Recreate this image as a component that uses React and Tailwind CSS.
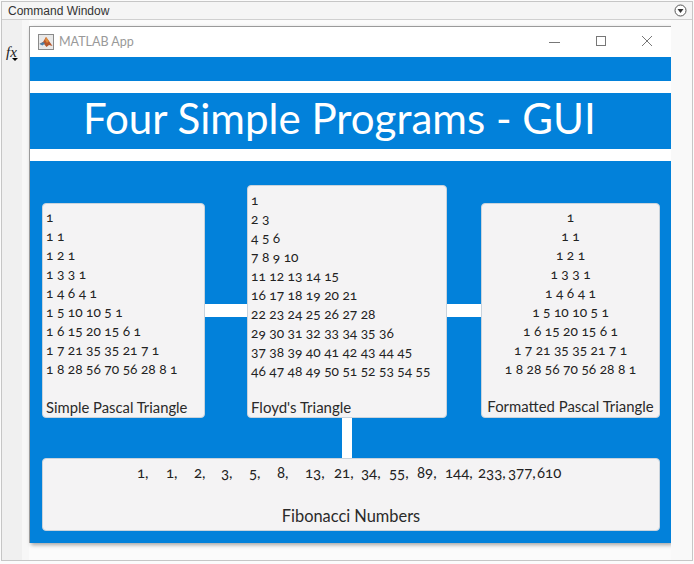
const pascal = ["1","1 1","1 2 1","1 3 3 1","1 4 6 4 1","1 5 10 10 5 1","1 6 15 20 15 6 1","1 7 21 35 35 21 7 1","1 8 28 56 70 56 28 8 1"];
const floyd = ["1","2 3","4 5 6","7 8 9 10","11 12 13 14 15","16 17 18 19 20 21","22 23 24 25 26 27 28","29 30 31 32 33 34 35 36","37 38 39 40 41 42 43 44 45","46 47 48 49 50 51 52 53 54 55"];
const fib = [["1","w-[29px]"],["1","w-[28px]"],["2","w-[27px]"],["3","w-[28px]"],["5","w-[28px]"],["8","w-[28px]"],["13","w-[29px]"],["21","w-[27px]"],["34","w-[28px]"],["55","w-[28px]"],["89","w-[28px]"],["144","w-[33px]"],["233","w-[30px]"],["377","w-[29px]"],["610","w-auto"]];
const font = "font-['Lato','Open_Sans',sans-serif]";

function Lines({ rows, center, pt }) {
  return (
    <div className={`${pt} ${center ? "text-center" : "pl-[3px]"} text-[13.7px] leading-[19px] text-[#222] oldstyle-nums`}>
      {rows.map((r) => <div key={r} className="h-[19.05px] whitespace-nowrap">{r}</div>)}
    </div>
  );
}

function Card({ className, children, label, labelClass }) {
  return (
    <div className={`${className} flex flex-col justify-between rounded-[4px] bg-[#f4f3f4] border border-[#c9d3dc]`}>
      {children}
      <div className={`${labelClass} leading-[18px] text-[#2a2a2a] whitespace-nowrap`}>{label}</div>
    </div>
  );
}

function MatlabIcon() {
  return (
    <svg width="16" height="16" viewBox="0 0 16 16">
      <rect x="0.5" y="0.5" width="15" height="15" fill="#e9e9e9" stroke="#8a8a8a" />
      <path d="M1.5 10 L5 8 L8 3 L11 7 L14.5 12 L11 11 L8.5 13 L6 10 Z" fill="#b5562a" />
      <path d="M1.5 10 L5 8 L7 9.5 L4.5 11.5 Z" fill="#4d7fa8" />
      <path d="M8 3 L11 7 L9 9 L7 6 Z" fill="#e08a3c" />
    </svg>
  );
}

export default function App() {
  return (
    <div className={`${font} w-[694px] h-[564px] bg-[#fbfbfb] overflow-hidden pt-[1px] px-[1px] pb-[3px] flex flex-col`}>
      <div className="flex-1 flex flex-col border border-[#c6c6c6] min-h-0">
        <div className="h-[18px] flex items-center justify-between pl-[6px] pr-[5px] bg-[#f5f5f5] border-b border-[#d0d0d0] font-['Liberation_Sans',sans-serif] text-[12px] text-[#333]">
          <span>Command Window</span>
          <svg width="13" height="13" viewBox="0 0 13 13">
            <circle cx="6.5" cy="6.5" r="5.5" fill="#fff" stroke="#555" />
            <path d="M3.5 5 H9.5 L6.5 9 Z" fill="#333" />
          </svg>
        </div>
        <div className="flex-1 flex min-h-0">
          <div className="w-[20px] bg-[#f0f0f0] pt-[24px] pl-[4px] shrink-0">
            <div className="relative font-['Liberation_Serif',serif] italic text-[15px] leading-[16px] text-[#222]">
              fx
              <span className="absolute left-[6px] top-[14px] w-0 h-0 border-x-[3px] border-x-transparent border-t-[3px] border-t-black"></span>
            </div>
          </div>
          <div className="w-[7px] bg-[#f7f7f7] shrink-0"></div>
          <div className="w-[642px] h-[517px] mt-[6px] shrink-0 flex flex-col border-t border-l border-[#9a9a9a] shadow-[2px_2px_4px_rgba(0,0,0,0.35)]">
            <div className="h-[30px] bg-white flex items-center pl-[8px] pr-[12px]">
              <MatlabIcon />
              <span className="ml-[5px] text-[12.5px] text-[#999] flex-1">MATLAB App</span>
              <svg width="110" height="14" viewBox="0 0 110 14" stroke="#777" fill="none" strokeWidth="1">
                <path d="M0 7.5 H11" />
                <rect x="47.5" y="1.5" width="9" height="9" />
                <path d="M93 1 L103 11 M103 1 L93 11" />
              </svg>
            </div>
            <div className="flex-1 bg-[#0281da] flex flex-col">
              <div className="h-[24px]"></div>
              <div className="h-[12px] bg-white"></div>
              <div className="h-[56px] flex items-center pl-[53px] pb-[6px] text-white text-[42.1px] leading-[50px] whitespace-nowrap">
                Four Simple Programs - GUI
              </div>
              <div className="h-[12px] bg-white"></div>
              <div className="flex items-end pl-[12px] pt-[24px]">
                <Card className="w-[163px] h-[215px] text-[14.8px]" label="Simple Pascal Triangle" labelClass="pl-[3px] pb-[1px]">
                  <Lines rows={pascal} pt="pt-[3px]" />
                </Card>
                <div className="w-[42px] h-[13px] bg-white mb-[101px]"></div>
                <Card className="w-[200px] h-[233px] text-[15px]" label="Floyd's Triangle" labelClass="pl-[3px] pb-[1px]">
                  <Lines rows={floyd} pt="pt-[4px]" />
                </Card>
                <div className="w-[34px] h-[13px] bg-white mb-[101px]"></div>
                <Card className="w-[179px] h-[215px] text-[14.9px]" label="Formatted Pascal Triangle" labelClass="text-center pb-[2px]">
                  <Lines rows={pascal} center pt="pt-[3px]" />
                </Card>
              </div>
              <div className="w-[10px] h-[40px] bg-white ml-[312px]"></div>
              <Card className="w-[618px] h-[73px] ml-[12px] text-[16.4px]" label="Fibonacci Numbers" labelClass="text-center pb-[5px]">
                <div className="flex pl-[94px] pt-[3px] text-[15px] leading-[20px] text-[#222] oldstyle-nums">
                  {fib.map(([n, w], i) => (
                    <span key={i} className={`${w} whitespace-nowrap`}>{n}{i < fib.length - 1 ? "," : ""}</span>
                  ))}
                </div>
              </Card>
            </div>
          </div>
          <div className="flex-1 bg-[#f9f9f9]"></div>
        </div>
      </div>
    </div>
  );
}
